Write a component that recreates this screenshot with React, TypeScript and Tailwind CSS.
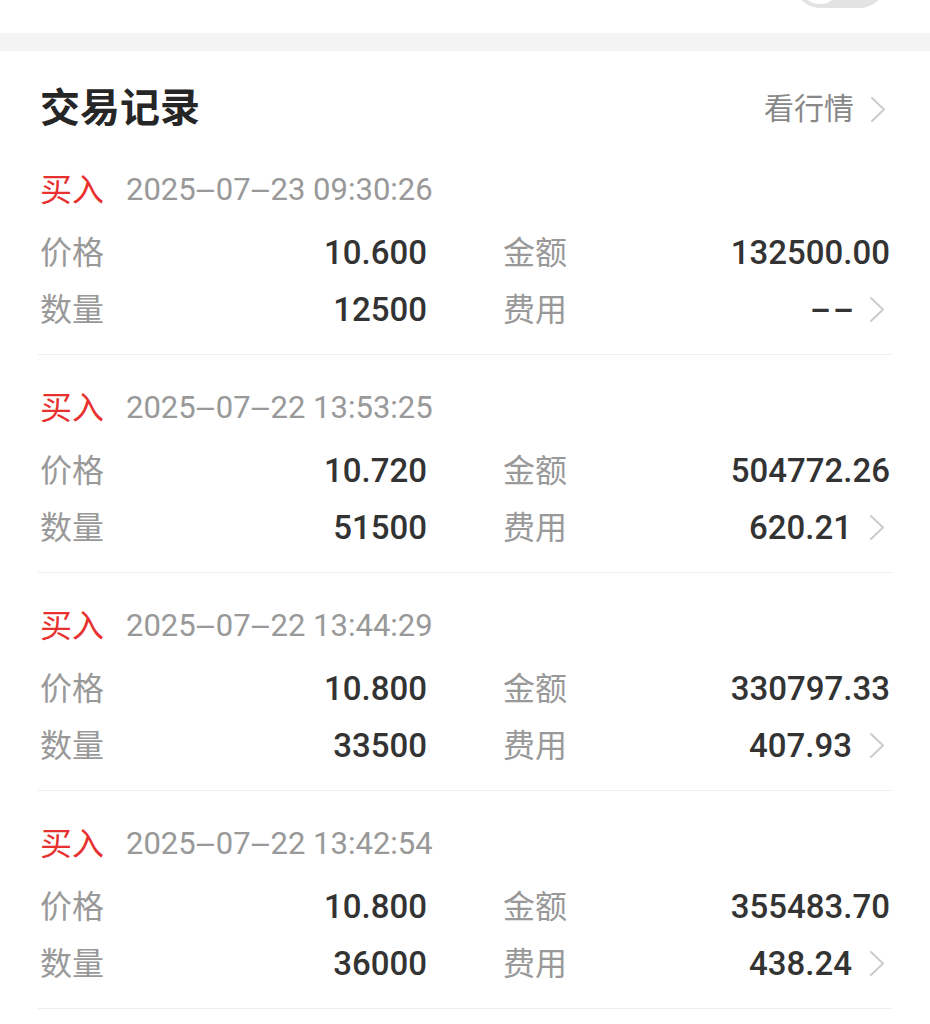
import React from 'react';

const records = [
  { time: '2025-07-23 09:30:26', price: '10.600', amount: '132500.00', qty: '12500', fee: '--' },
  { time: '2025-07-22 13:53:25', price: '10.720', amount: '504772.26', qty: '51500', fee: '620.21' },
  { time: '2025-07-22 13:44:29', price: '10.800', amount: '330797.33', qty: '33500', fee: '407.93' },
  { time: '2025-07-22 13:42:54', price: '10.800', amount: '355483.70', qty: '36000', fee: '438.24' },
];

const Chevron = () => (
  <svg width="16" height="27" viewBox="0 0 16 27" fill="none" className="shrink-0">
    <polyline points="2,2 14,13.5 2,25" stroke="#cccccc" strokeWidth="2" strokeLinecap="round" strokeLinejoin="round" />
  </svg>
);

// dashes in the app font are wide, stretch them out
const Dashed = ({ text }: { text: string }) => {
  const parts = text.split('-');
  return (
    <>
      {parts.map((p, i) => (
        <React.Fragment key={i}>
          {i > 0 && (
            <span className="inline-block w-[20px] text-center">
              <span className="inline-block scale-x-[2.3]">-</span>
            </span>
          )}
          {p}
        </React.Fragment>
      ))}
    </>
  );
};

const Empty = () => (
  <span className="inline-flex gap-[7px]">
    <span className="inline-block w-[16px] text-center">
      <span className="inline-block scale-x-[1.9]">-</span>
    </span>
    <span className="inline-block w-[16px] text-center">
      <span className="inline-block scale-x-[1.9]">-</span>
    </span>
  </span>
);

const Field = ({ label, value, arrow }: { label: string; value: React.ReactNode; arrow?: boolean }) => (
  <div className="h-[57px] flex items-center justify-between">
    <span className="text-[32px] text-[#999999]">{label}</span>
    <div className="flex items-center">
      <span className="text-[33px] font-medium text-[#333333]">{value}</span>
      {arrow && (
        <div className="ml-[17px] mr-[5px] flex items-center">
          <Chevron />
        </div>
      )}
    </div>
  </div>
);

export default function App() {
  return (
    <div
      className="min-h-screen bg-white overflow-hidden"
      style={{ fontFamily: 'Roboto, "Noto Sans CJK SC", sans-serif' }}
    >
      {/* top remnant with switch */}
      <div className="h-[33px] flex justify-end pr-[45px]">
        <div className="w-[90px] h-[50px] -mt-[42px] rounded-full bg-[#e3e3e3] p-[4px]">
          <div className="w-[42px] h-[42px] rounded-full bg-white" />
        </div>
      </div>
      <div className="h-[18px] bg-[#f4f4f4]" />

      <section className="px-[38px]">
        <header className="h-[86px] pt-[38px] flex items-start justify-between pl-[2px]">
          <h1 className="text-[40px] leading-[40px] font-bold text-[#262626]">交易记录</h1>
          <div className="flex items-center gap-[16px] pr-[6px]">
            <span className="text-[30px] leading-[40px] text-[#888888]">看行情</span>
            <Chevron />
          </div>
        </header>

        {records.map((r, i) => (
          <div key={i} className="pt-[30px] pb-[16px] border-b border-[#eeeeee]">
            <div className="h-[46px] flex items-center pl-[2px]">
              <span className="text-[32px] text-[#e8312f]">买入</span>
              <span className="ml-[22px] text-[31px] text-[#999999]">
                <Dashed text={r.time} />
              </span>
            </div>
            <div className="mt-[11px] grid grid-cols-2 gap-x-[76px] px-[2px]">
              <div>
                <Field label="价格" value={r.price} />
                <Field label="数量" value={r.qty} />
              </div>
              <div>
                <Field label="金额" value={r.amount} />
                <Field label="费用" value={r.fee === '--' ? <Empty /> : r.fee} arrow />
              </div>
            </div>
          </div>
        ))}
      </section>
    </div>
  );
}
